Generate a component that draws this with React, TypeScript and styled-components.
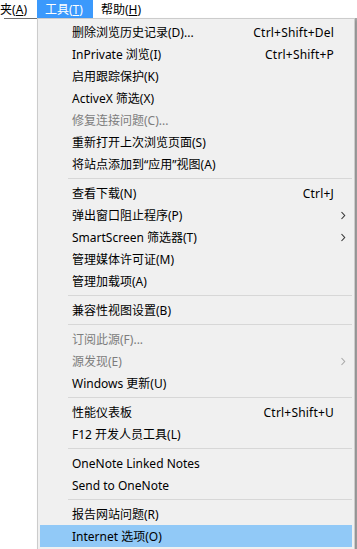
import React from 'react';
import styled, { createGlobalStyle } from 'styled-components';

type Entry =
  | { kind: 'item'; label: string; shortcut?: string; sub?: boolean; disabled?: boolean; active?: boolean }
  | { kind: 'sep' };

const item = (label: string, extra: Partial<Omit<Extract<Entry, { kind: 'item' }>, 'kind' | 'label'>> = {}): Entry => ({
  kind: 'item',
  label,
  ...extra,
});
const sep: Entry = { kind: 'sep' };

const entries: Entry[] = [
  item('删除浏览历史记录(D)...', { shortcut: 'Ctrl+Shift+Del' }),
  item('InPrivate 浏览(I)', { shortcut: 'Ctrl+Shift+P' }),
  item('启用跟踪保护(K)'),
  item('ActiveX 筛选(X)'),
  item('修复连接问题(C)...', { disabled: true }),
  item('重新打开上次浏览页面(S)'),
  item('将站点添加到“应用”视图(A)'),
  sep,
  item('查看下载(N)', { shortcut: 'Ctrl+J' }),
  item('弹出窗口阻止程序(P)', { sub: true }),
  item('SmartScreen 筛选器(T)', { sub: true }),
  item('管理媒体许可证(M)'),
  item('管理加载项(A)'),
  sep,
  item('兼容性视图设置(B)'),
  sep,
  item('订阅此源(F)...', { disabled: true }),
  item('源发现(E)', { disabled: true, sub: true }),
  item('Windows 更新(U)'),
  sep,
  item('性能仪表板', { shortcut: 'Ctrl+Shift+U' }),
  item('F12 开发人员工具(L)'),
  sep,
  item('OneNote Linked Notes'),
  item('Send to OneNote'),
  sep,
  item('报告网站问题(R)'),
  item('Internet 选项(O)', { active: true }),
];

const GlobalStyle = createGlobalStyle`
  html, body {
    margin: 0;
    padding: 0;
    background: #ffffff;
    overflow: hidden;
  }
  body {
    font-family: "Noto Sans", "Noto Sans CJK SC", sans-serif;
    font-size: 12px;
    color: #000000;
  }
`;

const Window = styled.div`
  position: relative;
  width: 357px;
  height: 549px;
  display: flex;
  flex-direction: column;
  overflow: hidden;
`;

const MenuBar = styled.div`
  display: flex;
  height: 18px;
  align-items: stretch;
`;

const BarItem = styled.div<{ $open?: boolean; $width?: number }>`
  display: flex;
  align-items: center;
  justify-content: ${(p) => (p.$width ? 'flex-end' : 'flex-start')};
  flex: 0 0 auto;
  width: ${(p) => (p.$width ? `${p.$width}px` : 'auto')};
  box-sizing: border-box;
  padding: 0 10px 0 8px;
  white-space: nowrap;
  background: ${(p) => (p.$open ? '#3b99fc' : 'transparent')};
  color: ${(p) => (p.$open ? '#ffffff' : '#000000')};

  u {
    text-decoration: underline;
    text-underline-offset: 1px;
  }
`;

const Body = styled.div`
  flex: 1;
  display: flex;
`;

const Content = styled.div`
  flex: 1;
  margin-left: 4px;
  border-top: 1px solid #6f6f6f;
`;

const Edge = styled.div`
  width: 2px;
  background: #a9a9a9;
`;

const Dropdown = styled.div`
  position: absolute;
  left: 37px;
  top: 18px;
  width: 318px;
  box-sizing: border-box;
  border: 1px solid #cccccc;
  background: #f0f0f0;
  padding: 2px;
  box-shadow: 2px 2px 3px rgba(0, 0, 0, 0.15);
`;

const Row = styled.div<{ $disabled?: boolean; $active?: boolean }>`
  display: grid;
  grid-template-columns: 1fr auto 18px;
  align-items: center;
  height: 22px;
  padding-left: 32px;
  white-space: nowrap;
  color: ${(p) => (p.$disabled ? '#7d7d7d' : '#000000')};
  background: ${(p) => (p.$active ? '#91c9f7' : 'transparent')};
`;

const Shortcut = styled.span`
  text-align: right;
  letter-spacing: 0.2px;
`;

const Arrow = styled.span<{ $disabled?: boolean }>`
  display: flex;
  justify-content: center;
  color: ${(p) => (p.$disabled ? '#a8a8a8' : '#333333')};
`;

const Separator = styled.div`
  height: 7px;
  display: flex;
  align-items: center;
  padding-left: 28px;

  &::after {
    content: '';
    flex: 1;
    height: 1px;
    background: #d7d7d7;
  }
`;

function Chevron() {
  return (
    <svg width="6" height="9" viewBox="0 0 6 9" fill="none">
      <path d="M1.5 1 L4.7 4.5 L1.5 8" stroke="currentColor" strokeWidth="1.1" />
    </svg>
  );
}

export default function App() {
  return (
    <Window>
      <GlobalStyle />
      <MenuBar>
        <BarItem $width={37}>
          夹(<u>A</u>)
        </BarItem>
        <BarItem $open>
          工具(<u>T</u>)
        </BarItem>
        <BarItem>
          帮助(<u>H</u>)
        </BarItem>
      </MenuBar>
      <Body>
        <Content />
        <Edge />
      </Body>
      <Dropdown>
        {entries.map((e, i) =>
          e.kind === 'sep' ? (
            <Separator key={i} />
          ) : (
            <Row key={i} $disabled={e.disabled} $active={e.active}>
              <span>{e.label}</span>
              <Shortcut>{e.shortcut}</Shortcut>
              <Arrow $disabled={e.disabled}>{e.sub && <Chevron />}</Arrow>
            </Row>
          ),
        )}
      </Dropdown>
    </Window>
  );
}
